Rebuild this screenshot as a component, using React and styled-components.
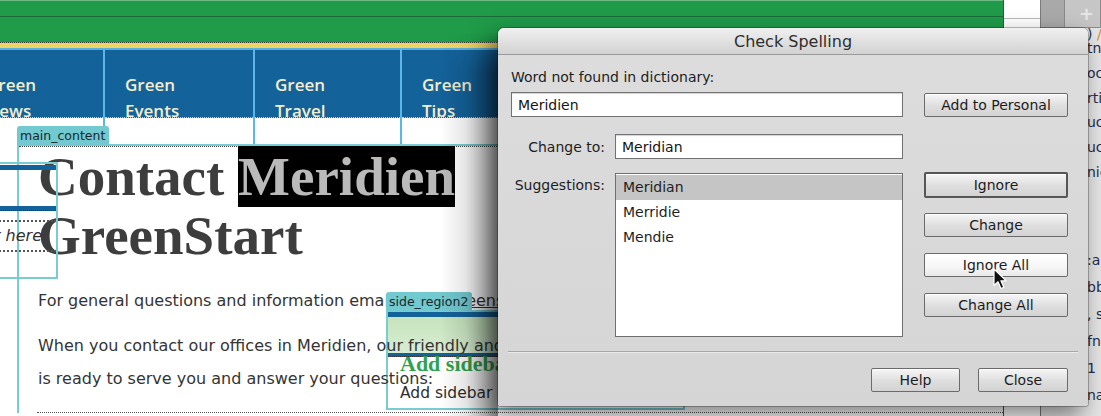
import React from 'react';
import styled, { createGlobalStyle, css } from 'styled-components';

const GlobalStyle = createGlobalStyle`
    html, body {
        margin: 0;
        padding: 0;
        background: #fff;
    }
    body {
        font-family: "DejaVu Sans", sans-serif;
    }
`;

const TEAL = '#78cdd3';
const NAV_BLUE = '#14629a';

const Screen = styled.div`
    position: relative;
    width: 1101px;
    height: 416px;
    overflow: hidden;
    display: flex;
    background: #fff;
`;

const DesignView = styled.div`
    display: flex;
    flex: none;
    width: 1040px;
    height: 100%;
`;

const PageCanvas = styled.div`
    position: relative;
    flex: none;
    width: 1003px;
    height: 100%;
    overflow: hidden;
    background: #fff;
`;

const Gutter = styled.div`
    flex: 1;
    border-left: 1px solid #4a4a4a;
    background: linear-gradient(#fff 0 18px, #b9b9b9 18px 19px, #fff 19px);
`;

const Header = styled.header`
    height: 42px;
    background: linear-gradient(#6dbb84 0 1px, #1f9b49 1px 16px, #1b6b3a 16px 17px, #1f9b49 17px);
    border-bottom: 1px dotted #3b3b3b;
`;

const Band = styled.div`
    height: 5px;
    background: #f0d366;
`;

const NavRow = styled.nav`
    display: flex;
    height: 96px;
    margin-left: -34px;
`;

const NavCell = styled.div`
    flex: none;
    width: ${props => props.$w}px;
    border-right: 2px solid #5db7e6;
`;

const NavLink = styled.a`
    display: block;
    box-sizing: border-box;
    height: 70px;
    overflow: hidden;
    padding: 22px 0 0 20px;
    background: ${NAV_BLUE};
    border-top: 2px solid #58b0e0;
    border-bottom: 1px dotted #e9cf5e;
    font: 600 17px/26px 'Open Sans', sans-serif;
    color: #f4eecd;
    text-decoration: none;

    span {
        display: block;
    }
`;

const MainBox = styled.section`
    position: relative;
    margin-left: 17px;
    padding-left: 19px;
    border-left: 2px solid ${TEAL};
    border-top: 2px solid ${TEAL};
`;

const InnerRule = styled.div`
    margin-left: -19px;
    border-top: 1px dotted #444;
`;

const Tag = styled.div`
    position: absolute;
    top: -20px;
    left: -2px;
    z-index: 2;
    height: 19px;
    padding: 0 4px 0 3px;
    background: #72c9cf;
    border-radius: 3px 3px 0 0;
    font: 12.5px/19px 'DejaVu Sans', sans-serif;
    color: #16282a;
    white-space: nowrap;
`;

const Title = styled.h1`
    margin: 0;
    width: 470px;
    font: bold 55px/59px 'Liberation Serif', serif;
    color: #3d3d3d;
`;

const Highlight = styled.span`
    background: #000;
    color: #bababa;
`;

const Para = styled.p`
    position: relative;
    z-index: 1;
    margin: ${props => props.$mt}px 0 0;
    font: 16px/33px 'DejaVu Sans', sans-serif;
    color: #343434;
    white-space: nowrap;
`;

const Link = styled.span`
    text-decoration: underline;
`;

const Divider = styled.div`
    margin: 17px 0 0 -1px;
    border-top: 1px dotted #555;
`;

const SidebarOutline = styled.div`
    position: absolute;
    left: -40px;
    top: 162px;
    width: 96px;
    height: 113px;
    border: 2px solid ${TEAL};
    border-left: 0;
    display: flex;
    flex-direction: column;
`;

const BlueBar = styled.div`
    height: ${props => props.$h}px;
    margin-top: ${props => props.$mt || 0}px;
    background: ${NAV_BLUE};
    border-bottom: ${props => (props.$dotted ? '1px dotted #333' : '0')};
`;

const DottedRule = styled.div`
    margin-top: ${props => props.$mt}px;
    border-top: 2px dotted #555;
`;

const SideNote = styled.div`
    display: flex;
    justify-content: flex-end;
    padding-right: 14px;
    font: italic 16px/28px 'DejaVu Sans', sans-serif;
    color: #333;
    white-space: nowrap;
`;

const SideRegion = styled.div`
    position: absolute;
    left: 386px;
    top: 310px;
    box-sizing: border-box;
    width: 299px;
    height: 100px;
    border: 2px solid ${TEAL};
    display: flex;
    flex-direction: column;
`;

const GreenPanel = styled.div`
    height: 36px;
    background: linear-gradient(#c6e4bd, #d8edd2);
`;

const SideHeading = styled.h3`
    margin: 0;
    padding-left: 12px;
    font: bold 22px/14px 'Liberation Serif', serif;
    color: #2fa24d;
    white-space: nowrap;
`;

const SideText = styled.p`
    margin: 11px 0 0;
    padding-left: 12px;
    font: 15.5px/22px 'DejaVu Sans', sans-serif;
    color: #2e2e2e;
    white-space: nowrap;
`;

const SidePanel = styled.aside`
    flex: 1;
    display: flex;
    flex-direction: column;
    background: #e6e6e6;
    border-left: 1px solid #7a7a7a;
    overflow: hidden;
`;

const PanelBar = styled.div`
    display: flex;
    height: 27px;
    border-bottom: 1px solid #8c8c8c;
`;

const PanelTab = styled.div`
    width: ${props => props.$w}px;
    background: ${props => props.$bg};
    border-right: 1px solid #8a8a8a;
    display: flex;
    align-items: center;
    justify-content: flex-end;
    padding-right: 6px;
    font: bold 18px/1 'DejaVu Sans', sans-serif;
    color: #e6e6e6;
`;

const PanelLines = styled.div`
    padding-left: 46px;
    font: 14px 'DejaVu Sans', sans-serif;
    color: #1f2d4d;
    white-space: nowrap;
`;

const PanelLine = styled.div`
    height: ${props => props.$lh}px;
    line-height: ${props => props.$lh}px;
    margin-top: ${props => props.$mt || 0}px;
`;

const Orange = styled.span`
    color: #d0893a;
`;

const Dialog = styled.div`
    position: absolute;
    left: 498px;
    top: 28px;
    z-index: 10;
    box-sizing: border-box;
    width: 590px;
    height: 378px;
    display: flex;
    flex-direction: column;
    background: linear-gradient(#dddddd, #d5d5d5);
    border-radius: 6px 6px 3px 3px;
    box-shadow:
        -6px 10px 24px rgba(0, 0, 0, 0.5),
        0 0 0 1px rgba(0, 0, 0, 0.25);
    font: 14px 'DejaVu Sans', sans-serif;
    color: #1e1e1e;

    /* soft drop shade falling on the page to the left */
    &::before {
        content: '';
        position: absolute;
        left: -58px;
        top: 4px;
        bottom: -14px;
        width: 58px;
        background: linear-gradient(
            to right,
            rgba(0, 0, 0, 0),
            rgba(0, 0, 0, 0.1) 45%,
            rgba(0, 0, 0, 0.3) 80%,
            rgba(0, 0, 0, 0.45)
        );
        -webkit-mask-image: linear-gradient(to bottom, transparent, #000 40px);
        mask-image: linear-gradient(to bottom, transparent, #000 40px);
        pointer-events: none;
    }
`;

const TitleBar = styled.div`
    flex: none;
    height: 26px;
    display: flex;
    align-items: center;
    justify-content: center;
    border-bottom: 1px solid #9a9a9a;
    border-radius: 6px 6px 0 0;
    background: linear-gradient(#f0f0f0, #d2d2d2);
    font-size: 16px;
    color: #2e2e2e;
`;

const Body = styled.div`
    padding: 13px 20px 0 13px;
`;

const Row = styled.div`
    display: grid;
    grid-template-columns: 94px 288px 1fr;
    column-gap: 10px;
    align-items: ${props => props.$align || 'center'};
    margin-top: ${props => props.$mt || 0}px;
`;

const Label = styled.label`
    grid-column: ${props => props.$span || 'auto'};
    text-align: ${props => (props.$right ? 'right' : 'left')};
    line-height: 18px;
    padding-top: ${props => props.$pt || 0}px;
    white-space: nowrap;
`;

const TextInput = styled.input`
    grid-column: ${props => props.$span || 'auto'};
    box-sizing: border-box;
    width: 100%;
    height: 25px;
    margin: 0;
    padding: 0 6px;
    border: 1px solid #727272;
    border-radius: 0;
    background: #fff;
    box-shadow: inset 0 1px 1px rgba(0, 0, 0, 0.18);
    font: 14px 'DejaVu Sans', sans-serif;
    color: #151515;
    outline: none;
`;

const Button = styled.button`
    box-sizing: border-box;
    width: ${props => props.$w || 144}px;
    height: 24px;
    margin: 0;
    padding: 0;
    border: 1px solid #6b6b6b;
    border-radius: 2px;
    background: linear-gradient(#f6f6f6, #dedede 55%, #d3d3d3);
    box-shadow: inset 0 1px 0 #fff;
    font: 14px 'DejaVu Sans', sans-serif;
    color: #1c1c1c;
    justify-self: end;

    ${props =>
        props.$default &&
        css`
            height: 26px;
            margin: -1px 0;
            border: 2px solid #565656;
        `}

    ${props =>
        props.$hover &&
        css`
            background: linear-gradient(#ffffff, #f6f6f6 60%, #e9e9e9);
        `}
`;

const List = styled.ul`
    box-sizing: border-box;
    height: 164px;
    margin: 0;
    padding: 1px 0 0;
    list-style: none;
    border: 1px solid #6f6f6f;
    background: #fff;
`;

const Item = styled.li`
    height: 25px;
    line-height: 24px;
    padding-left: 7px;
    background: ${props => (props.$selected ? '#c5c5c5' : 'transparent')};
`;

const ButtonStack = styled.div`
    display: flex;
    flex-direction: column;
    align-items: flex-end;
    gap: 16px;
`;

const Separator = styled.hr`
    margin: 14px 10px 0;
    border: 0;
    border-top: 1px solid #a6a6a6;
    border-bottom: 1px solid #ebebeb;
`;

const Footer = styled.div`
    display: flex;
    justify-content: flex-end;
    gap: 18px;
    margin-top: 15px;
    padding-right: 20px;
`;

const Cursor = styled.svg`
    position: absolute;
    left: 495px;
    top: 240px;
`;

const navItems = [
    { w: 137, words: ['Green', 'News'] },
    { w: 148, words: ['Green', 'Events'] },
    { w: 145, words: ['Green', 'Travel'] },
    { w: 148, words: ['Green', 'Tips'] },
    { w: 148, words: ['Green', 'Shop'] },
    { w: 148, words: ['Contact', 'Us'] },
];

const panelTop = ['tn', 'oc', 'rti', 'uc', 'uc', 'nic'];
const panelBottom = ['bb', ', s', 'fn', '1', 'na'];

const App = () => {
    return (
        <Screen>
            <GlobalStyle />
            <DesignView>
                <PageCanvas>
                    <Header />
                    <Band />
                    <NavRow>
                        {navItems.map(item => (
                            <NavCell key={item.words.join(' ')} $w={item.w}>
                                <NavLink>
                                    <span>{item.words[0]}</span>
                                    <span>{item.words[1]}</span>
                                </NavLink>
                            </NavCell>
                        ))}
                    </NavRow>
                    <MainBox>
                        <Tag>main_content</Tag>
                        <InnerRule />
                        <Title>
                            Contact <Highlight>Meridien</Highlight> GreenStart
                        </Title>
                        <Para $mt={19}>
                            For general questions and information email: <Link>info@greenstart.org</Link>.
                        </Para>
                        <Para $mt={12}>
                            When you contact our offices in Meridien, our friendly and knowledgeable staff
                            <br />
                            is ready to serve you and answer your questions:
                        </Para>
                        <Divider />
                    </MainBox>

                    <SidebarOutline>
                        <BlueBar $h={5} $mt={1} />
                        <BlueBar $h={4} $mt={36} $dotted />
                        <DottedRule $mt={9} />
                        <SideNote>Insert content here</SideNote>
                        <DottedRule $mt={0} />
                    </SidebarOutline>

                    <SideRegion>
                        <Tag>side_region2</Tag>
                        <BlueBar $h={5} />
                        <GreenPanel />
                        <BlueBar $h={3} $dotted />
                        <SideHeading>Add sidebar content</SideHeading>
                        <SideText>Add sidebar content here</SideText>
                    </SideRegion>
                </PageCanvas>
                <Gutter />
            </DesignView>

            <SidePanel>
                <PanelBar>
                    <PanelTab $w={22} $bg="#a9a9a9" />
                    <PanelTab $w={38} $bg="#c6c6c6">+</PanelTab>
                </PanelBar>
                <PanelLines>
                    <PanelLine $lh={12}>
                        ) <Orange>/</Orange>
                    </PanelLine>
                    {panelTop.map((t, i) => (
                        <PanelLine key={`t${i}`} $lh={24.8} $mt={i === 0 ? -4 : 0}>
                            {t}
                        </PanelLine>
                    ))}
                    <PanelLine $lh={27} $mt={62}>
                        :a
                    </PanelLine>
                    {panelBottom.map((t, i) => (
                        <PanelLine key={`b${i}`} $lh={27}>
                            {t}
                        </PanelLine>
                    ))}
                </PanelLines>
            </SidePanel>

            <Dialog>
                <TitleBar>Check Spelling</TitleBar>
                <Body>
                    <Row>
                        <Label $span="1 / 3">Word not found in dictionary:</Label>
                    </Row>
                    <Row $mt={6}>
                        <TextInput $span="1 / 3" readOnly value="Meridien" />
                        <Button>Add to Personal</Button>
                    </Row>
                    <Row $mt={17}>
                        <Label $right>Change to:</Label>
                        <TextInput readOnly value="Meridian" />
                    </Row>
                    <Row $mt={14} $align="start">
                        <Label $right $pt={3}>
                            Suggestions:
                        </Label>
                        <List>
                            <Item $selected>Meridian</Item>
                            <Item>Merridie</Item>
                            <Item>Mendie</Item>
                        </List>
                        <ButtonStack>
                            <Button $default>Ignore</Button>
                            <Button>Change</Button>
                            <Button $hover>Ignore All</Button>
                            <Button>Change All</Button>
                        </ButtonStack>
                    </Row>
                </Body>
                <Separator />
                <Footer>
                    <Button $w={89}>Help</Button>
                    <Button $w={90}>Close</Button>
                </Footer>
                <Cursor width="16" height="23" viewBox="0 0 16 23">
                    <path
                        d="M1 1 L1 17.5 L5 13.8 L8 20.5 L10.8 19.3 L7.9 12.8 L13.2 12.8 Z"
                        fill="#111"
                        stroke="#fff"
                        strokeWidth="1.2"
                        strokeLinejoin="round"
                    />
                </Cursor>
            </Dialog>
        </Screen>
    );
};

export default App;
